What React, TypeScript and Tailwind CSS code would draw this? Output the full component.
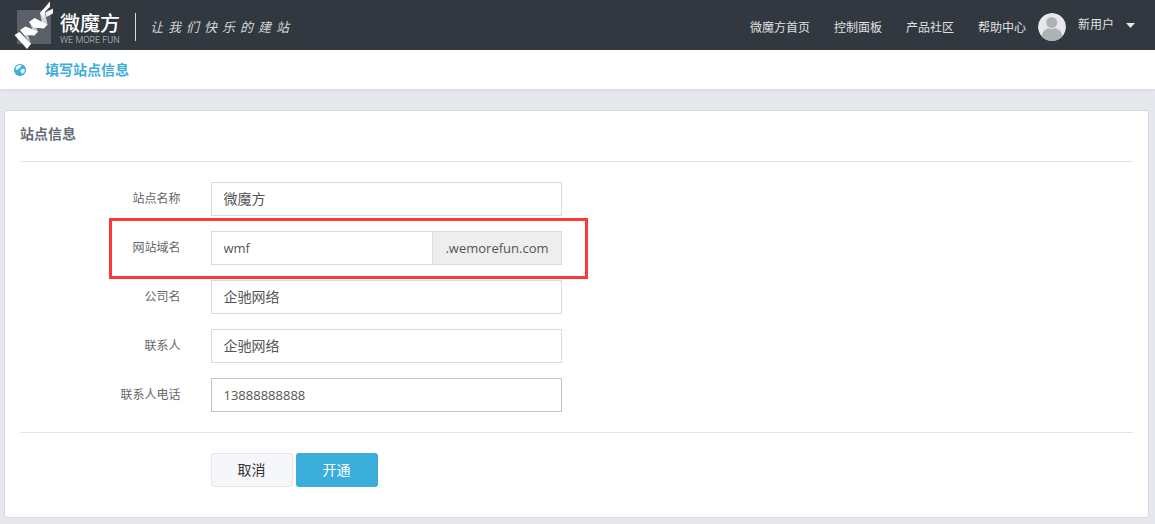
import { useState } from 'react';

const cjk = "font-['Open_Sans','Noto_Sans_CJK_SC',sans-serif]";

const navLinks = ['微魔方首页', '控制面板', '产品社区', '帮助中心'];

function LogoMark() {
  return (
    <svg className="h-[50px] w-10 shrink-0" viewBox="0 0 40 50" aria-hidden="true">
      <rect x="3" y="10" width="34" height="34" fill="#5b6069" />
      {/* folded sides of the ribbon */}
      <path d="M6.5 30L12 29L17 44L12 38Z" fill="#c2c4c8" />
      <path d="M15.5 22L20.5 22L24 32.5L18.5 30Z" fill="#c2c4c8" />
      <path d="M26 13L31 12L33.5 25L28 23Z" fill="#d4d5d8" />
      {/* front faces */}
      <path d="M0.5 35L5.5 32L17 44L13 49Z" fill="#fff" />
      <path d="M6 30L11.5 26.5L24 31.5L20.5 35.5L10.5 35Z" fill="#fff" />
      <path d="M15 22L20.5 18L33.5 24.5L30 28.5L19.5 27.5Z" fill="#fff" />
      <path d="M26 13L36 1.5V7L31 11.5L30 18Z" fill="#fff" />
      <path d="M31.5 12.5L39 8.5V13.5L32.5 17Z" fill="#f0f0f1" />
    </svg>
  );
}

function GlobeIcon() {
  return (
    <svg className="h-3 w-3" viewBox="0 0 12 12" aria-hidden="true">
      <circle cx="6" cy="6" r="6" fill="#3aaddb" />
      <path d="M4.2 1.2L6.8 1L7.6 2.2L6.2 3.4L5 5L3.4 5.2L2.6 6.4L1.4 4.6L2.4 2.6Z" fill="#e4f4fa" />
      <path d="M7.4 5.2L9.6 4.6L11 6L10 8.4L8 10L7.2 8.4L6 7.2Z" fill="#e4f4fa" />
    </svg>
  );
}

function Avatar() {
  return (
    <svg className="h-7 w-7 rounded-full" viewBox="0 0 28 28" aria-hidden="true">
      <circle cx="14" cy="14" r="14" fill="#e7e8ee" />
      <ellipse cx="14" cy="24" rx="10.5" ry="9.5" fill="#aeb2b5" />
      <circle cx="13.7" cy="9.5" r="6.5" fill="#e7e8ee" />
      <circle cx="13.7" cy="9.5" r="5.5" fill="#aeb2b5" />
    </svg>
  );
}

function Header() {
  return (
    <header className="flex h-[50px] items-center justify-between bg-[#31383f] pl-3.5 pr-5">
      <a href="#" className="flex items-center text-white">
        <LogoMark />
        <span className="ml-1.5 flex flex-col pt-2">
          <span className="text-[20px] leading-[22px] font-medium">微魔方</span>
          <span className="font-['Roboto',sans-serif] text-[9px] leading-[10px] font-light text-[#c3c6ca]">WE MORE FUN</span>
        </span>
        <span className="ml-[15px] mt-1 h-7 w-px bg-[#d8dadc]" />
        <span className="ml-3.5 flex gap-[5px] pt-1 text-[13px] leading-5 text-[#d4d6d8] italic">
          {Array.from('让我们快乐的建站').map((char) => (
            <span key={char}>{char}</span>
          ))}
        </span>
      </a>

      <div className="flex items-center text-[12px] leading-5 text-[#e0e1e2]">
        <nav className="mr-3 flex gap-6 pt-1.5">
          {navLinks.map((link) => (
            <a key={link} href="#">{link}</a>
          ))}
        </nav>
        <button type="button" className="flex items-center pt-1">
          <Avatar />
          <span className="mb-1 ml-3">新用户</span>
          <svg className="mb-1 ml-3 h-[5px] w-[9px]" viewBox="0 0 9 5" aria-hidden="true">
            <path d="M0 0H9L4.5 5Z" fill="#e6e7e8" />
          </svg>
        </button>
      </div>
    </header>
  );
}

type FieldProps = {
  id: string;
  label: string;
  value: string;
  onChange: (value: string) => void;
  latin?: boolean;
  active?: boolean;
  suffix?: string;
  highlighted?: boolean;
};

function Field({ id, label, value, onChange, latin, active, suffix, highlighted }: FieldProps) {
  return (
    <div className="relative flex w-1/2">
      <label htmlFor={id} className="w-1/3 px-[15px] pt-[7px] text-right text-[12px] leading-5 text-[#666]">
        {label}
      </label>
      <div className="flex w-2/3 px-[15px]">
        <input
          id={id}
          type="text"
          value={value}
          onChange={(e) => onChange(e.target.value)}
          className={`h-[34px] w-full min-w-0 border bg-white px-3 text-[#555] outline-none ${latin ? 'text-[13px]' : 'pb-0.5 text-[14px]'} ${active ? 'border-[#c4c4c4]' : 'border-[#dbdbdb]'}`}
        />
        {suffix && (
          <span className="flex items-center border border-l-0 border-[#dbdbdb] bg-[#eee] px-3 pt-0.5 text-[13px] text-[#555]">
            {suffix}
          </span>
        )}
      </div>
      {highlighted && (
        <div className="pointer-events-none absolute -top-[13px] -right-[11px] -bottom-3.5 left-[104px] border-3 border-[#fb3838]" />
      )}
    </div>
  );
}

export default function App() {
  const [site, setSite] = useState({
    name: '微魔方',
    domain: 'wmf',
    company: '企驰网络',
    contact: '企驰网络',
    phone: '13888888888',
  });

  const update = (key: keyof typeof site) => (value: string) =>
    setSite({ ...site, [key]: value });

  return (
    <div className={`min-h-screen bg-[#e7e8ed] ${cjk}`}>
      <Header />

      {/* Page title */}
      <div className="flex h-10 items-center border-b border-[#dcdde2] bg-white pl-3.5 shadow-xs">
        <GlobeIcon />
        <h1 className="ml-[19px] text-[14px] leading-5 font-bold text-[#3aaddb]">填写站点信息</h1>
      </div>

      <main className="px-1 pt-5 pb-1.5 pr-1.5">
        <form
          className="rounded-[3px] border border-[#d5d9e2] bg-white px-[15px] pb-[30px]"
          onSubmit={(e) => e.preventDefault()}
        >
          <h2 className="border-b border-[#e3e4e6] pt-[13px] pb-[17px] text-[14px] leading-5 font-bold text-[#666b78]">
            站点信息
          </h2>

          <div className="-mx-[15px] flex flex-col gap-[15px] py-5">
            <Field id="name" label="站点名称" value={site.name} onChange={update('name')} />
            <Field id="domain" label="网站域名" value={site.domain} onChange={update('domain')} latin suffix=".wemorefun.com" highlighted />
            <Field id="company" label="公司名" value={site.company} onChange={update('company')} />
            <Field id="contact" label="联系人" value={site.contact} onChange={update('contact')} />
            <Field id="phone" label="联系人电话" value={site.phone} onChange={update('phone')} latin active />
          </div>

          {/* Actions */}
          <div className="-mx-[15px]">
            <hr className="mx-[15px] border-[#e3e4e6]" />
            <div className="ml-[16.6667%] flex gap-[3px] px-[15px] pt-5 text-[14px]">
              <button type="button" className="h-[34px] w-[82px] rounded-[3px] border border-[#e7e8ee] bg-[#f6f7fb] pb-0.5 text-[#333]">
                取消
              </button>
              <button type="submit" className="h-[34px] w-[82px] rounded-[3px] bg-[#3aaddb] pb-0.5 text-white">
                开通
              </button>
            </div>
          </div>
        </form>
      </main>
    </div>
  );
}
